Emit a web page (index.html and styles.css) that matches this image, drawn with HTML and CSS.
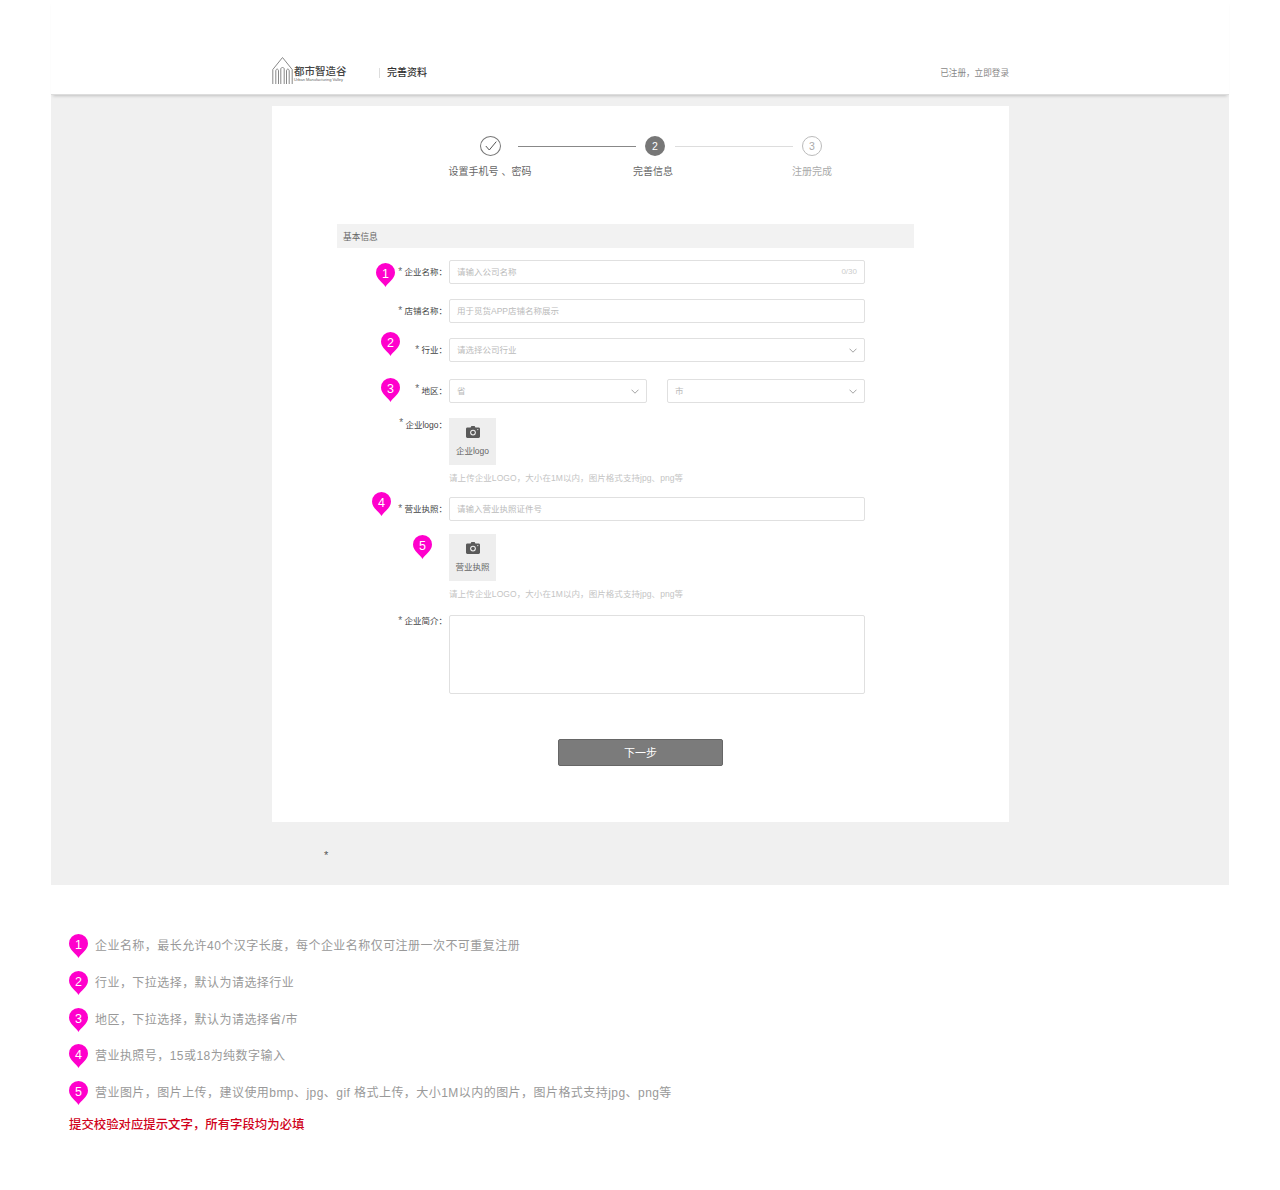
FILE: index.html
```html
<!DOCTYPE html>
<html lang="zh-CN">

<head>
  <meta charset="UTF-8">
  <meta name="viewport" content="width=device-width, initial-scale=1.0">
  <title>完善资料</title>
  <link rel="stylesheet" href="styles.css">
</head>

<body>
  <svg class="defs" width="0" height="0">
    <symbol id="pin" viewBox="0 0 19 24">
      <path d="M9.5 24C7.800 20.200 0 16.200 0 9.500A9.500 9.500 0 0 1 19 9.500C19 16.200 11.200 20.200 9.500 24z" fill="#ff00cc" />
    </symbol>
    <symbol id="camera" viewBox="0 0 14 12">
      <path d="M4.6 1.6 5.4 0h3.2l.8 1.6h3.2c.8 0 1.4.6 1.4 1.3v7.7c0 .8-.6 1.4-1.4 1.4H1.4C.6 12 0 11.4 0 10.6V2.9c0-.7.6-1.3 1.4-1.3z" fill="#5a5a5a" />
      <circle cx="7" cy="6.6" r="2.9" fill="#eee" />
      <circle cx="7" cy="6.6" r="1.8" fill="#5a5a5a" />
      <circle cx="11.8" cy="3.6" r=".6" fill="#eee" />
    </symbol>
    <symbol id="chevron" viewBox="0 0 8 5">
      <path d="M.5.7 4 4.2 7.5.7" fill="none" stroke="#999" stroke-width=".9" />
    </symbol>
  </svg>

  <header class="top-bar">
    <div class="top-inner">
      <svg class="logo-mark" width="21" height="28" viewBox="0 0 21 28">
        <g fill="none" stroke="#888" stroke-width="1">
          <path d="M.8 27V12.500L10.500 .5 20.200 12.500V27" />
          <path d="M3.800 27V14C3.800 11.500 6.500 11.500 6.500 14V27" />
          <path d="M8.800 27V12C8.800 10 12.200 10 12.200 12V27" />
          <path d="M14.500 27V14C14.500 11.500 17.200 11.500 17.200 14V27" />
        </g>
      </svg>
      <div class="logo-text">
        <div class="logo-cn">都市智造谷</div>
        <div class="logo-en">Urban Manufacturing Valley</div>
      </div>
      <div class="top-title">完善资料</div>
      <div class="top-login">已注册，立即登录</div>
    </div>
  </header>

  <main class="panel">
    <div class="card">
      <div class="steps">
        <span class="step-dot step-done">
          <svg width="12" height="10" viewBox="0 0 12 10">
            <path d="M.8 5 4.300 9 11.300.6" fill="none" stroke="#555" stroke-width="1" />
          </svg>
        </span>
        <span class="step-line step-line-first"></span>
        <span class="step-dot step-current">2</span>
        <span class="step-line step-line-second"></span>
        <span class="step-dot step-todo">3</span>
      </div>
      <div class="step-labels">
        <div class="step-label">设置手机号 、密码</div>
        <div class="step-label">完善信息</div>
        <div class="step-label step-label-todo">注册完成</div>
      </div>

      <div class="form">
        <div class="section-title">基本信息</div>

        <div class="row row-first">
          <span class="pin pin-a"><svg><use href="#pin" /></svg><b>1</b></span>
          <label class="label"><i>*</i> 企业名称：</label>
          <div class="field input">
            <span>请输入公司名称</span>
            <span class="count">0/30</span>
          </div>
        </div>

        <div class="row">
          <label class="label"><i>*</i> 店铺名称：</label>
          <div class="field input"><span>用于觅货APP店铺名称展示</span></div>
        </div>

        <div class="row">
          <span class="pin pin-b"><svg><use href="#pin" /></svg><b>2</b></span>
          <label class="label"><i>*</i> 行业：</label>
          <div class="field input">
            <span>请选择公司行业</span>
            <svg class="chevron"><use href="#chevron" /></svg>
          </div>
        </div>

        <div class="row row-region">
          <span class="pin pin-c"><svg><use href="#pin" /></svg><b>3</b></span>
          <label class="label"><i class="raised">*</i> 地区：</label>
          <div class="field split">
            <div class="input">
              <span>省</span>
              <svg class="chevron"><use href="#chevron" /></svg>
            </div>
            <div class="input">
              <span>市</span>
              <svg class="chevron"><use href="#chevron" /></svg>
            </div>
          </div>
        </div>

        <div class="row">
          <label class="label label-top"><i class="raised">*</i> 企业logo：</label>
          <div class="field">
            <div class="upload">
              <svg class="camera"><use href="#camera" /></svg>
              <span>企业logo</span>
            </div>
            <div class="hint">请上传企业LOGO，大小在1M以内，图片格式支持jpg、png等</div>
          </div>
        </div>

        <div class="row row-tight">
          <span class="pin pin-d"><svg><use href="#pin" /></svg><b>4</b></span>
          <label class="label"><i>*</i> 营业执照：</label>
          <div class="field input"><span>请输入营业执照证件号</span></div>
        </div>

        <div class="row row-tight">
          <span class="pin pin-e"><svg><use href="#pin" /></svg><b>5</b></span>
          <div class="label"></div>
          <div class="field">
            <div class="upload">
              <svg class="camera"><use href="#camera" /></svg>
              <span>营业执照</span>
            </div>
            <div class="hint">请上传企业LOGO，大小在1M以内，图片格式支持jpg、png等</div>
          </div>
        </div>

        <div class="row">
          <label class="label label-intro"><i>*</i> 企业简介：</label>
          <div class="field textarea"></div>
        </div>
      </div>

      <div class="submit">下一步</div>
    </div>
    <div class="stray">*</div>
  </main>

  <section class="notes">
    <div class="note">
      <span class="pin"><svg><use href="#pin" /></svg><b>1</b></span>
      <p>企业名称，最长允许40个汉字长度，每个企业名称仅可注册一次不可重复注册</p>
    </div>
    <div class="note">
      <span class="pin"><svg><use href="#pin" /></svg><b>2</b></span>
      <p>行业，下拉选择，默认为请选择行业</p>
    </div>
    <div class="note">
      <span class="pin"><svg><use href="#pin" /></svg><b>3</b></span>
      <p>地区，下拉选择，默认为请选择省/市</p>
    </div>
    <div class="note">
      <span class="pin"><svg><use href="#pin" /></svg><b>4</b></span>
      <p>营业执照号，15或18为纯数字输入</p>
    </div>
    <div class="note">
      <span class="pin"><svg><use href="#pin" /></svg><b>5</b></span>
      <p>营业图片，图片上传，建议使用bmp、jpg、gif 格式上传，大小1M以内的图片，图片格式支持jpg、png等</p>
    </div>
    <div class="note-red">提交校验对应提示文字，所有字段均为必填</div>
  </section>
</body>

</html>
```

FILE: styles.css
```css
* {
  margin: 0;
  padding: 0;
  box-sizing: border-box;
}

body {
  font-family: "Liberation Sans", "Noto Sans CJK SC", sans-serif;
  background: white;
  color: #333;
}

.defs {
  position: absolute;
}

/* header */
.top-bar {
  height: 95px;
  margin: 0 51px;
  padding: 57px 220px 0 221px;
  position: relative;
  z-index: 1;
  background: white;
  border-bottom: 1px solid #ddd;
  box-shadow: 0 3px 3px -2px rgba(0, 0, 0, 0.2);
}

.top-inner {
  display: flex;
  align-items: flex-start;
  height: 28px;
}

.logo-mark {
  flex: none;
}

.logo-text {
  margin-left: 1px;
  padding-top: 8px;
  width: 54px;
}

.logo-cn {
  font-size: 10.500px;
  line-height: 12px;
  font-weight: 500;
  color: #444;
  white-space: nowrap;
}

.logo-en {
  font-size: 4px;
  line-height: 5px;
  color: #666;
  white-space: nowrap;
}

.top-title {
  margin-left: 31px;
  margin-top: 11px;
  padding-left: 7px;
  border-left: 1px solid #ddd;
  height: 10px;
  font-size: 10px;
  line-height: 10px;
  font-weight: 500;
  color: #333;
  white-space: nowrap;
}

.top-login {
  margin-left: auto;
  margin-top: 10px;
  font-size: 8.600px;
  line-height: 12px;
  color: #888;
}

/* gray area */
.panel {
  height: 790px;
  margin: 0 51px;
  padding: 11px 0 0 221px;
  background: #f0f0f0;
}

.card {
  width: 737px;
  height: 716px;
  padding-top: 30px;
  background: white;
}

.stray {
  margin: 26px 0 0 52px;
  font-size: 11px;
  line-height: 14px;
  color: #555;
}

/* steps */
.steps {
  display: flex;
  align-items: center;
  height: 20px;
  padding-left: 208px;
}

.step-dot {
  flex: none;
  display: flex;
  align-items: center;
  justify-content: center;
  width: 21px;
  height: 20px;
  border-radius: 50%;
  font-size: 10.500px;
}

.step-done {
  border: 1px solid #777;
}

.step-current {
  width: 20px;
  background: #777;
  color: white;
}

.step-todo {
  width: 20px;
  border: 1px solid #bbb;
  color: #aaa;
}

.step-line {
  flex: none;
  width: 118px;
  height: 1px;
}

.step-line-first {
  margin: 0 9px 0 17px;
  background: #888;
}

.step-line-second {
  margin: 0 9px 0 10px;
  background: #ddd;
}

.step-labels {
  display: flex;
  margin-top: 9px;
  padding-left: 158px;
}

.step-label {
  width: 120px;
  margin-right: 43px;
  text-align: center;
  font-size: 10px;
  line-height: 14px;
  color: #666;
  white-space: nowrap;
}

.step-label:nth-child(2) {
  margin-right: 39px;
}

.step-label-todo {
  color: #aaa;
}

/* form */
.form {
  margin: 45px 0 0 65px;
  width: 577px;
}

.section-title {
  height: 24px;
  padding-left: 6px;
  background: #f2f2f2;
  font-size: 8.700px;
  line-height: 26px;
  color: #666;
}

.row {
  display: flex;
  position: relative;
  margin-top: 15px;
}

.row-first {
  margin-top: 12px;
}

.row-region {
  margin-top: 17px;
}

.row-tight {
  margin-top: 13px;
}

.label {
  flex: none;
  width: 110px;
  margin-right: 2px;
  text-align: right;
  font-size: 8.500px;
  line-height: 24px;
  color: #444;
  white-space: nowrap;
}

.label i {
  font-style: normal;
  font-size: 10px;
  color: #666;
}

.label .raised {
  position: relative;
  top: -2px;
}

.label-top {
  line-height: 14px;
}

.label-intro {
  line-height: 12px;
}

.field {
  width: 416px;
}

.input {
  display: flex;
  align-items: center;
  justify-content: space-between;
  height: 24px;
  padding: 0 7px 2px 7px;
  border: 1px solid #e0e0e0;
  border-radius: 2px;
  font-size: 8.500px;
  color: #bbb;
}

.count {
  color: #ccc;
  font-size: 8px;
}

.chevron {
  width: 8px;
  height: 5px;
  margin-top: 2px;
}

.split {
  display: flex;
  justify-content: space-between;
}

.split .input {
  width: 198px;
}

.upload {
  display: flex;
  flex-direction: column;
  align-items: center;
  width: 47px;
  height: 47px;
  padding-top: 8px;
  background: #eee;
  font-size: 8.500px;
  line-height: 12px;
  color: #666;
  white-space: nowrap;
}

.camera {
  width: 14px;
  height: 12px;
  margin-bottom: 7px;
}

.hint {
  margin-top: 7px;
  font-size: 8.500px;
  line-height: 12px;
  letter-spacing: 0.07px;
  color: #c4c4c4;
  white-space: nowrap;
}

.textarea {
  height: 79px;
  border: 1px solid #e0e0e0;
  border-radius: 2px;
}

.submit {
  width: 165px;
  height: 27px;
  margin: 45px 0 0 286px;
  background: #7b7b7b;
  border: 1px solid #666;
  border-radius: 2px;
  text-align: center;
  font-size: 11px;
  line-height: 26px;
  color: white;
}

/* pins */
.pin {
  display: block;
  flex: none;
  position: relative;
  width: 19px;
  height: 24px;
}

.pin svg {
  display: block;
  width: 19px;
  height: 24px;
}

.pin b {
  position: absolute;
  left: 0;
  right: 0;
  top: 4px;
  text-align: center;
  font-size: 12.500px;
  line-height: 14px;
  font-weight: 400;
  color: white;
}

.row .pin {
  position: absolute;
}

.pin-a {
  left: 39px;
  top: 3px;
}

.pin-b {
  left: 44px;
  top: -6px;
}

.pin-c {
  left: 44px;
  top: -1px;
}

.pin-d {
  left: 35px;
  top: -5px;
}

.pin-e {
  left: 76px;
  top: 1px;
}

/* notes below */
.notes {
  padding: 49px 0 0 69px;
}

.note {
  display: flex;
  align-items: flex-start;
  height: 24px;
  margin-bottom: 12.750px;
}

.note p {
  margin-left: 7px;
  font-size: 12px;
  line-height: 24px;
  letter-spacing: 0.45px;
  color: #999;
  white-space: nowrap;
}

.note-red {
  margin-top: -2px;
  font-size: 12.400px;
  line-height: 18px;
  font-weight: 500;
  color: #d0021b;
}
```
